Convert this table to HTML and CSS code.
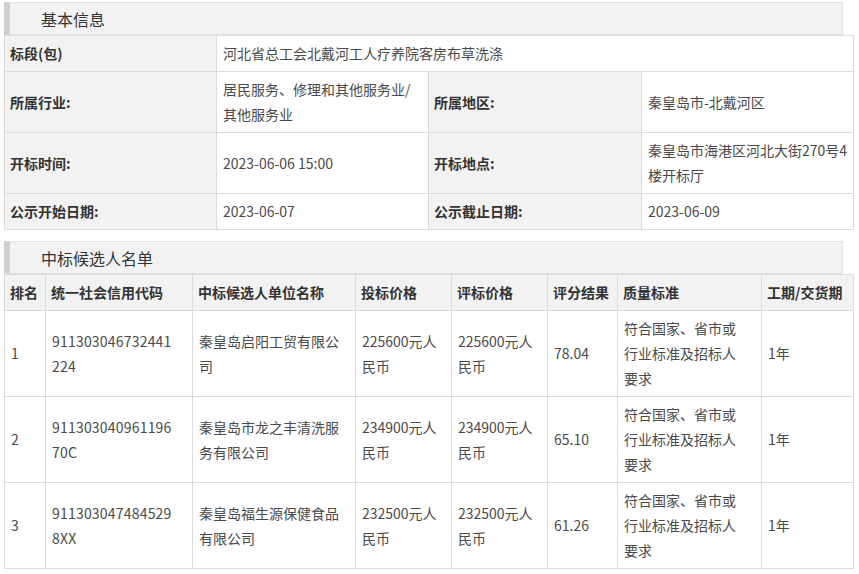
FILE: index.html
```html
<!DOCTYPE html>
<html lang="zh">
<head>
<meta charset="utf-8">
<link rel="stylesheet" href="styles.css">
</head>
<body>
<div class="page">
  <div class="section-title">基本信息</div>
  <table class="info">
    <colgroup><col class="c1"><col class="c2"><col class="c3"><col class="c4"></colgroup>
    <tr><th>标段(包)</th><td colspan="3">河北省总工会北戴河工人疗养院客房布草洗涤</td></tr>
    <tr><th>所属行业:</th><td>居民服务、修理和其他服务业/其他服务业</td><th>所属地区:</th><td>秦皇岛市-北戴河区</td></tr>
    <tr><th>开标时间:</th><td>2023-06-06 15:00</td><th>开标地点:</th><td>秦皇岛市海港区河北大街270号4楼开标厅</td></tr>
    <tr><th>公示开始日期:</th><td>2023-06-07</td><th>公示截止日期:</th><td>2023-06-09</td></tr>
  </table>
  <div class="section-title second">中标候选人名单</div>
  <table class="list">
    <colgroup><col class="k1"><col class="k2"><col class="k3"><col class="k4"><col class="k5"><col class="k6"><col class="k7"><col class="k8"></colgroup>
    <tr class="head"><th>排名</th><th>统一社会信用代码</th><th>中标候选人单位名称</th><th>投标价格</th><th>评标价格</th><th>评分结果</th><th>质量标准</th><th>工期/交货期</th></tr>
    <tr><td>1</td><td class="code">911303046732441<br>224</td><td>秦皇岛启阳工贸有限公司</td><td>225600元人民币</td><td>225600元人民币</td><td>78.04</td><td>符合国家、省市或<br>行业标准及招标人<br>要求</td><td>1年</td></tr>
    <tr><td>2</td><td class="code">911303040961196<br>70C</td><td>秦皇岛市龙之丰清洗服务有限公司</td><td>234900元人民币</td><td>234900元人民币</td><td>65.10</td><td>符合国家、省市或<br>行业标准及招标人<br>要求</td><td>1年</td></tr>
    <tr><td>3</td><td class="code">911303047484529<br>8XX</td><td>秦皇岛福生源保健食品有限公司</td><td>232500元人民币</td><td>232500元人民币</td><td>61.26</td><td>符合国家、省市或<br>行业标准及招标人<br>要求</td><td>1年</td></tr>
  </table>
</div>
</body>
</html>
```

FILE: styles.css
```css
html, body {
  margin: 0;
  padding: 0;
  background: #fff;
}
body {
  font-family: "Noto Sans CJK SC", "Noto Sans", sans-serif;
  font-size: 14px;
  color: #4a4a4a;
}
.page {
  padding: 2px 6px 0 4px;
  width: 849px;
  box-sizing: border-box;
}
.section-title {
  height: 33px;
  line-height: 32px;
  box-sizing: border-box;
  background: #f2f2f2;
  border: 1px solid #e2e2e2;
  border-left: 6px solid #cfcfcf;
  padding-left: 31px;
  font-size: 16px;
  color: #333;
}
.section-title.second {
  margin-top: 11px;
}
table {
  border-collapse: collapse;
  table-layout: fixed;
  width: 849px;
}
th, td {
  border: 1px solid #dcdcdc;
  line-height: 25px;
  text-align: left;
  vertical-align: middle;
  word-break: break-all;
}
.info th, .info td {
  padding: 5px 5px 5px 5px;
}
.info td {
  padding-left: 6px;
}
.info th {
  background: #f2f2f2;
  font-weight: bold;
  color: #333;
}
.info tr:first-child th, .info tr:first-child td { height: 25px; }
.info tr:nth-child(4) th, .info tr:nth-child(4) td { height: 25px; }
.info tr:nth-child(2) td, .info tr:nth-child(3) td { height: 50px; }
.c1 { width: 212px; }
.c2 { width: 212px; }
.c3 { width: 213px; }
.c4 { width: 212px; }
.list th, .list td {
  padding: 5px 6px;
}
.list .head th {
  background: #f2f2f2;
  font-weight: bold;
  color: #333;
  height: 24px;
  padding: 5px 5px;
  white-space: nowrap;
}
.list td {
  height: 75px;
}
.list td.code {
  letter-spacing: 0.2px;
}
.k1 { width: 41px; }
.k2 { width: 147px; }
.k3 { width: 163px; }
.k4 { width: 96px; }
.k5 { width: 96px; }
.k6 { width: 70px; }
.k7 { width: 144px; }
.k8 { width: 92px; }
```
